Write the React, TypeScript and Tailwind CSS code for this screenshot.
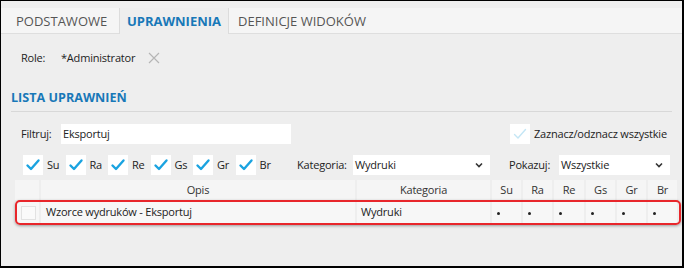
import React from "react";

const Check = ({ faded }: { faded?: boolean }) => (
  <svg width="16" height="16" viewBox="0 0 16 16">
    <path
      d="M2.5 8.5 L6 12 L13.5 3.5"
      fill="none"
      stroke={faded ? "#c4e6f5" : "#1aa3e0"}
      strokeWidth={faded ? 1.4 : 2.4}
      strokeLinecap="round"
      strokeLinejoin="round"
    />
  </svg>
);

const Chevron = () => (
  <svg width="10" height="10" viewBox="0 0 10 10">
    <path d="M2 3.5 L5 6.5 L8 3.5" fill="none" stroke="#333" strokeWidth="1.6" />
  </svg>
);

const CheckBox = ({ label }: { label: string }) => (
  <div className="flex items-center gap-[4px] w-[42.5px] shrink-0">
    <div className="w-[20px] h-[20px] bg-white flex items-center justify-center shrink-0">
      <Check />
    </div>
    <span>{label}</span>
  </div>
);

const cols = ["Su", "Ra", "Re", "Gs", "Gr", "Br"];
const colW = ["w-[29px]", "w-[29px]", "w-[30px]", "w-[29px]", "w-[29px]", "w-[29px]"];

export default function App() {
  return (
    <div
      className="w-[684px] h-[268px] bg-[#eeeeee] border-t border-l border-r-2 border-b-2 border-black text-[11px] tracking-[-0.2px] text-[#222] overflow-hidden flex flex-col whitespace-nowrap"
      style={{ fontFamily: '"Open Sans", "Noto Sans", sans-serif' }}
    >
      {/* Tabs */}
      <div className="h-[33px] shrink-0 flex flex-col bg-[#efefef]">
        <div className="h-[7px]" />
        <div className="flex-1 bg-[#f5f5f5] border-b border-[#dedede] flex items-stretch text-[13px] tracking-normal text-[#555] pl-[15px]">
          <div className="flex items-center pt-[2px] w-[103px]">PODSTAWOWE</div>
          <div className="flex items-center pt-[2px] justify-center w-[110px] bg-[#eeeeee] border-l border-r border-[#dcdcdc] -mb-px font-bold text-[#1878b8]">
            UPRAWNIENIA
          </div>
          <div className="flex items-center pt-[2px] pl-[9px]">DEFINICJE WIDOKÓW</div>
        </div>
      </div>

      {/* Role */}
      <div className="flex items-center h-[18px] mt-[15px] pl-[20px]">
        <span className="w-[40px]">Role:</span>
        <span>*Administrator</span>
        <svg width="12" height="12" viewBox="0 0 12 12" className="ml-[13px]">
          <path d="M1 1 L11 11 M11 1 L1 11" stroke="#b5b5b5" strokeWidth="1.2" />
        </svg>
      </div>

      {/* Section header */}
      <div className="mt-[22px] mx-[10px] h-[23px] border-b border-[#d8d8d8] text-[12.6px] tracking-normal font-bold text-[#1878b8] flex items-start">
        LISTA UPRAWNIEŃ
      </div>

      {/* Filter row */}
      <div className="flex items-center mt-[12px] h-[20px] pl-[20px]">
        <span className="w-[40px]">Filtruj:</span>
        <div className="w-[230px] h-[20px] bg-white flex items-center pl-[2px]">Eksportuj</div>
        <div className="ml-[219px] flex items-center gap-[4px]">
          <div className="w-[20px] h-[20px] bg-white flex items-center justify-center">
            <Check faded />
          </div>
          <span>Zaznacz/odznacz wszystkie</span>
        </div>
      </div>

      {/* Checkbox row */}
      <div className="flex items-center mt-[11px] h-[20px] pl-[22px]">
        {cols.map((c) => (
          <CheckBox key={c} label={c} />
        ))}
        <span className="ml-[19px] w-[56px] shrink-0">Kategoria:</span>
        <div className="w-[137px] shrink-0 h-[20px] bg-white flex items-center justify-between pl-[2px] pr-[6px]">
          <span>Wydruki</span>
          <Chevron />
        </div>
        <span className="ml-[19px] w-[50px] shrink-0">Pokazuj:</span>
        <div className="w-[111px] shrink-0 h-[20px] bg-white flex items-center justify-between pl-[2px] pr-[6px]">
          <span>Wszystkie</span>
          <Chevron />
        </div>
      </div>

      {/* Table */}
      <div className="mt-[5px] ml-[14px] flex flex-col">
        <div className="flex h-[20px] gap-[2px] text-[#333]">
          <div className="w-[24px] bg-[#f5f5f5]" />
          <div className="w-[314px] bg-[#f5f5f5] flex items-center justify-center">Opis</div>
          <div className="w-[133px] bg-[#f5f5f5] flex items-center justify-center">Kategoria</div>
          {cols.map((c, i) => (
            <div key={c} className={`${colW[i]} bg-[#f5f5f5] flex items-center justify-center`}>
              {c}
            </div>
          ))}
        </div>
        <div className="relative mt-[2px] h-[21px]">
          <div className="flex h-[21px] gap-[2px]">
            <div className="w-[24px] bg-[#f7f7f7] flex items-center justify-center pl-[3px]">
              <div className="w-[15px] h-[14px] bg-[#fafafa] border border-[#e2e2e2]" />
            </div>
            <div className="w-[314px] bg-[#f7f7f7] flex items-center pl-[5px]">Wzorce wydruków - Eksportuj</div>
            <div className="w-[133px] bg-[#f7f7f7] flex items-center pl-[4px]">Wydruki</div>
            {cols.map((c, i) => (
              <div key={c} className={`${colW[i]} bg-[#f7f7f7] flex items-center pl-[5px] pt-[2px]`}>
                <span className="w-[3px] h-[3px] rounded-full bg-[#222]" />
              </div>
            ))}
          </div>
          <div className="absolute left-0 top-[-2px] w-[666px] h-[25px] border-2 border-[#e8262b] rounded-[5px] shadow-[0_1px_3px_rgba(0,0,0,0.35)]" />
        </div>
      </div>
    </div>
  );
}
